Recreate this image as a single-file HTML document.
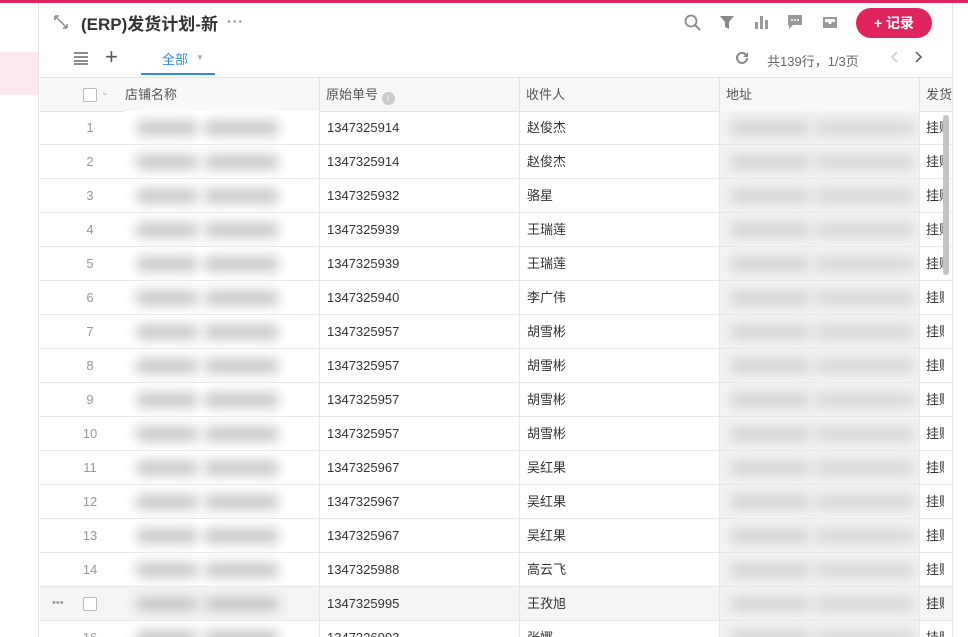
<!DOCTYPE html>
<html><head><meta charset="utf-8"><style>
*{margin:0;padding:0;box-sizing:border-box}
html,body{width:968px;height:637px;overflow:hidden}
body{background:#fff;font-family:"Liberation Sans","Noto Sans CJK SC",sans-serif;position:relative;color:#333}
.abs{position:absolute}
.row{position:absolute;left:40px;width:912px;height:34px;border-bottom:1px solid #e8e8e8;font-size:13px;overflow:hidden}
.row div{position:absolute;top:0;height:33px;line-height:33px}
.num{left:0;width:100px;text-align:center;color:#999;font-size:13px}
.c2{left:279px;width:200px;border-left:1px solid #e8e8e8;padding-left:7px}
.c3{left:479px;width:200px;border-left:1px solid #e8e8e8;padding-left:7px}
.c4{left:679px;width:200px;border-left:1px solid #e8e8e8;overflow:hidden}
.c5{left:879px;width:25px;border-left:1px solid #e8e8e8;padding-left:6px;overflow:hidden;white-space:nowrap}
.c1{left:84px;width:195px;overflow:hidden}
.bl{position:absolute;height:14px;top:10px;background:#c4c4c4;filter:blur(6px);border-radius:6px}
.hd{position:absolute;top:0;height:34px;line-height:34px;font-size:13px;color:#555;border-left:1px solid #e3e3e3;padding-left:6px}
</style></head><body>
<div class="abs" style="left:0;top:0;width:968px;height:3px;background:#e0245e"></div>
<div class="abs" style="left:0;top:52px;width:38px;height:43px;background:#fce8ee"></div>
<div class="abs" style="left:38px;top:3px;width:1px;height:634px;background:#e4e4e4"></div>
<div class="abs" style="left:952px;top:3px;width:1px;height:634px;background:#e8e8e8"></div>
<svg class="abs" style="left:53px;top:14px" width="16" height="16" viewBox="0 0 16 16"><path d="M2 2l12 12M2 2h4M2 2v4M14 14h-4M14 14v-4" stroke="#888" stroke-width="1.5" fill="none"/></svg>
<div class="abs" style="left:81px;top:10px;font-size:17px;font-weight:bold;color:#333">(ERP)发货计划-新</div>
<div class="abs" style="left:227px;top:13px;font-size:14px;color:#888;letter-spacing:1px;font-weight:bold">···</div>
<svg class="abs" style="left:73px;top:51px" width="16" height="14"><path d="M1 2h14M1 6h14M1 10h14M1 13h14" stroke="#666" stroke-width="1.4"/></svg>
<div class="abs" style="left:105px;top:44px;font-size:22px;color:#555;font-weight:300">+</div>
<div class="abs" style="left:162px;top:49px;font-size:13px;color:#2d8cde">全部</div>
<div class="abs" style="left:196px;top:53px;font-size:8px;color:#aaa">▼</div>
<div class="abs" style="left:141px;top:73px;width:74px;height:2px;background:#2d8cde"></div>
<svg class="abs" style="left:684px;top:14px" width="18" height="18"><circle cx="7" cy="7" r="5.5" stroke="#888" stroke-width="1.8" fill="none"/><path d="M11 11l5 5" stroke="#888" stroke-width="2"/></svg>
<svg class="abs" style="left:719px;top:14px" width="16" height="16"><path d="M1 2h14l-5 6v7l-4-2V8z" fill="#888"/></svg>
<svg class="abs" style="left:753px;top:14px" width="16" height="16"><rect x="2" y="8" width="3" height="7" fill="#999"/><rect x="7" y="2" width="3" height="13" fill="#999"/><rect x="12" y="6" width="3" height="9" fill="#999"/></svg>
<svg class="abs" style="left:787px;top:14px" width="16" height="16"><path d="M1 1h14v10H6l-4 4V11H1z" fill="#999"/><circle cx="5" cy="6" r="1" fill="#fff"/><circle cx="8" cy="6" r="1" fill="#fff"/><circle cx="11" cy="6" r="1" fill="#fff"/></svg>
<svg class="abs" style="left:822px;top:14px" width="16" height="16"><path d="M1 3h14v11H1z" fill="#999"/><path d="M3 5h10v3h-3l-1 2H7L6 8H3z" fill="#fff"/></svg>
<div class="abs" style="left:856px;top:8px;width:76px;height:30px;border-radius:15px;background:#e0245e;color:#fff;font-size:14px;font-weight:bold;line-height:30px;text-align:center">+ 记录</div>
<svg class="abs" style="left:735px;top:51px" width="14" height="14"><path d="M12 7a5 5 0 1 1-1.5-3.6" stroke="#888" stroke-width="2" fill="none"/><path d="M13 1v5H8z" fill="#888"/></svg>
<div class="abs" style="left:767px;top:51px;font-size:13px;color:#666">共139行，1/3页</div>
<svg class="abs" style="left:890px;top:51px" width="8" height="12"><path d="M7 1L2 6l5 5" stroke="#ccc" stroke-width="1.5" fill="none"/></svg>
<svg class="abs" style="left:915px;top:51px" width="8" height="12"><path d="M1 1l5 5-5 5" stroke="#555" stroke-width="1.5" fill="none"/></svg>
<div class="abs" style="left:40px;top:77px;width:912px;height:35px;background:#f7f7f7;border-top:1px solid #e3e3e3;border-bottom:1px solid #e3e3e3;overflow:hidden">
<div class="abs" style="left:43px;top:10px;width:14px;height:14px;border:1px solid #bbb;background:#fff;border-radius:2px"></div>
<div class="abs" style="left:61px;top:9px;font-size:9px;color:#aaa">⌄</div>
<div class="abs" style="left:85px;top:0;height:34px;line-height:34px;font-size:13px;color:#555">店铺名称</div>
<div class="hd" style="left:279px;width:200px">原始单号 <span style="display:inline-block;width:13px;height:13px;border-radius:50%;background:#ccc;color:#fff;font-size:9px;line-height:13px;text-align:center;vertical-align:-2px">i</span></div>
<div class="hd" style="left:479px;width:200px">收件人</div>
<div class="hd" style="left:679px;width:200px">地址</div>
<div class="hd" style="left:879px;width:33px;overflow:hidden;white-space:nowrap">发货</div>
</div>
<div id="rows"></div>
<div class="abs" style="left:943px;top:115px;width:6px;height:160px;background:#c4c4c4;border-radius:3px"></div>
<script>
var d=[["1347325914","赵俊杰"],["1347325914","赵俊杰"],["1347325932","骆星"],["1347325939","王瑞莲"],["1347325939","王瑞莲"],["1347325940","李广伟"],["1347325957","胡雪彬"],["1347325957","胡雪彬"],["1347325957","胡雪彬"],["1347325957","胡雪彬"],["1347325967","吴红果"],["1347325967","吴红果"],["1347325967","吴红果"],["1347325988","高云飞"],["1347325995","王孜旭"],["1347326003","张娜"]];
var h="";
for(var i=0;i<d.length;i++){var y=111+i*34;var hv=i==14;
h+='<div class="row" style="top:'+y+'px;'+(hv?'background:#f5f5f5':'')+'">';
if(hv)h+='<div style="left:12px;color:#999;font-size:11px">•••</div><div style="left:43px;top:10px;width:14px;height:14px;border:1px solid #bbb;background:#fff;border-radius:2px"></div>';
else h+='<div class="num">'+(i+1)+'</div>';
h+='<div class="c1" style="background:'+(hv?'#f5f5f5':'#fff')+'"><span class="bl" style="left:12px;width:62px"></span><span class="bl" style="left:80px;width:75px"></span></div>';
h+='<div class="c2">'+d[i][0]+'</div><div class="c3">'+d[i][1]+'</div>';
h+='<div class="c4" style="background:#f3f3f3"><span class="bl" style="left:10px;width:80px;background:#d2d2d2"></span><span class="bl" style="left:95px;width:100px;background:#d6d6d6"></span></div>';
h+='<div class="c5">挂账</div></div>';}
document.getElementById("rows").innerHTML=h;
</script>
</body></html>
